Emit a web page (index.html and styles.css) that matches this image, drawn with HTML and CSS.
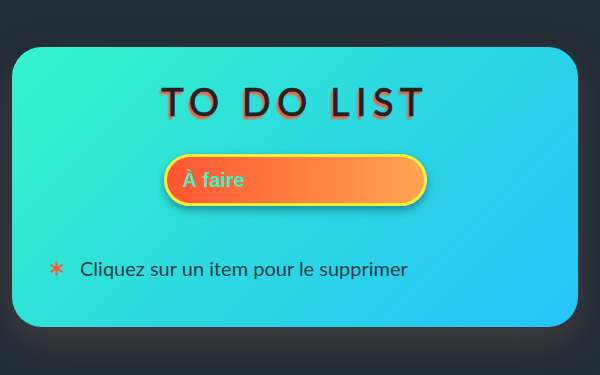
FILE: index.html
```html
<!DOCTYPE html>
<html lang="fr">
<head>
<meta charset="utf-8">
<title>To Do List</title>
<link rel="stylesheet" href="styles.css">
</head>
<body>
<main class="card">
  <h1 class="title">TO DO LIST</h1>
  <form class="form">
    <input class="todo-input" type="text" placeholder="À faire" autofocus>
  </form>
  <ul class="list"></ul>
  <p class="hint">
    <svg class="hint-icon" viewBox="0 0 16 16" width="15" height="15" aria-hidden="true">
      <g stroke="#ff5733" stroke-width="2.2" stroke-linecap="round">
        <line x1="8" y1="1.5" x2="8" y2="14.5"/>
        <line x1="2.4" y1="4.75" x2="13.6" y2="11.25"/>
        <line x1="2.4" y1="11.25" x2="13.6" y2="4.75"/>
      </g>
    </svg>
    <span>Cliquez sur un item pour le supprimer</span>
  </p>
</main>
</body>
</html>
```
FILE: styles.css
```css
html, body {
  margin: 0;
  padding: 0;
  height: 100%;
}
body {
  background: #222c35;
  font-family: "Lato", "Liberation Sans", sans-serif;
  padding: 47px 0 0 12px;
  box-sizing: border-box;
}
.card {
  width: 566px;
  height: 280px;
  box-sizing: border-box;
  border-radius: 30px;
  background: linear-gradient(135deg, #34f5c9 0%, #2dd9e0 50%, #26c3fa 100%);
  box-shadow: 0 14px 34px rgba(72, 70, 68, 0.75);
  padding: 31px 0 0;
  display: flex;
  flex-direction: column;
  align-items: center;
}
.title {
  margin: 0;
  font-family: "Lato", sans-serif;
  font-weight: 400;
  font-size: 38px;
  line-height: 46px;
  letter-spacing: 6.4px;
  color: #202226;
  -webkit-text-stroke: 0.7px #202226;
  text-shadow: -2px 3px 2px #ff5a36;
  padding-left: 0;
}
.form {
  margin: 30px 0 0;
}
.todo-input {
  display: block;
  width: 263px;
  height: 52px;
  box-sizing: border-box;
  border: 3px solid #f4f03a;
  border-radius: 26px;
  background: linear-gradient(90deg, #ff5533 0%, #ff7a3e 45%, #ffa552 100%);
  box-shadow: 0 4px 8px rgba(0, 0, 0, 0.35);
  padding: 0 16px;
  font-family: "Liberation Sans", Arial, sans-serif;
  font-size: 20px;
  font-weight: 700;
  color: #3ef0c0;
  caret-color: #3ef0c0;
  outline: none;
}
.todo-input::placeholder {
  color: #40f2c2;
  opacity: 1;
}
.list {
  margin: 0;
  padding: 0;
  list-style: none;
}
.hint {
  align-self: stretch;
  margin: 50px 0 0 37px;
  display: flex;
  align-items: center;
  gap: 16px;
  font-family: "Lato", sans-serif;
  font-size: 20px;
  color: #283e48;
}
.hint-icon {
  flex: none;
}
```
